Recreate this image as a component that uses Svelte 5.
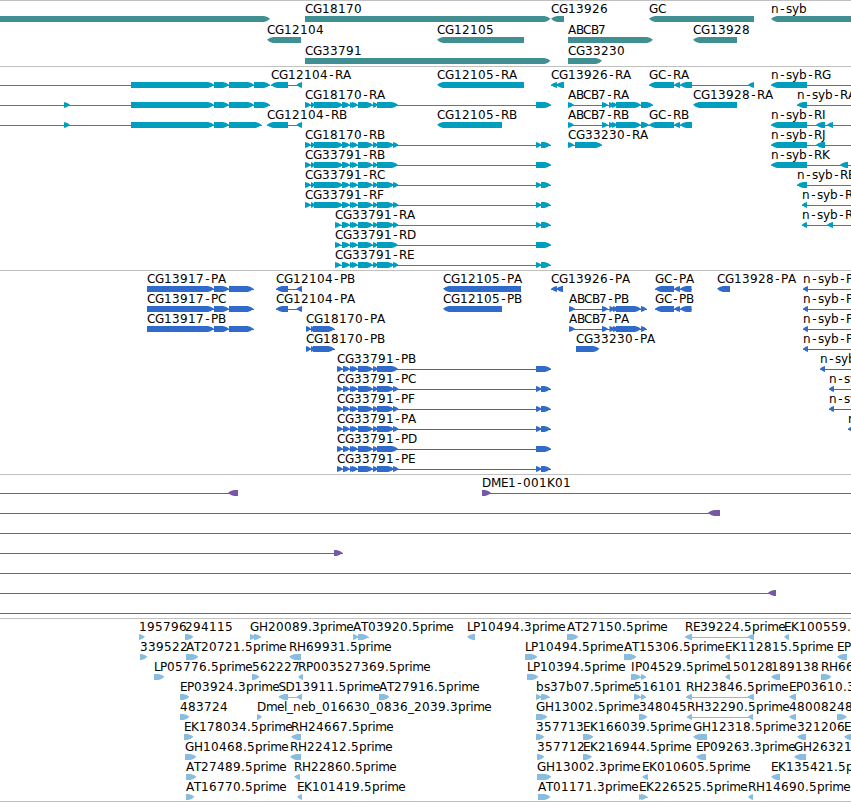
<script lang="ts">
  type Block = [number, number];

  interface Feature {
    row: number;
    name: string;
    strand: 1 | -1;
    blocks: Block[];
    span: Block;
  }

  interface Track {
    id: string;
    color: string;
    pitch: number;
    height: number;
    features: Feature[];
  }

  const width = 851;
  const barTop = 15;
  const barHeight = 6;

  // Features that run past the edge of the view
  const LEFT = -10;
  const RIGHT = 861;

  function f(row: number, name: string, strand: 1 | -1, blocks: Block[], from?: number, to?: number): Feature {
    const start = from ?? blocks[0][0];
    const end = to ?? blocks[blocks.length - 1][1];
    return { row, name, strand, blocks, span: [start, end] };
  }

  // Exon sets shared by several isoforms
  const cg13917: Block[] = [[131, 214], [214, 229], [229, 254], [254, 270]];
  const head: Block[] = [[305, 311], [311, 315], [314, 343]];
  const mid: Block[] = [[342, 350], [350, 355], [352, 358], [358, 373], [373, 378]];
  const tailLong: Block[] = [[377, 398], [536, 551]];
  const tailSplit: Block[] = [[377, 394], [393, 398.5], [536, 541.5], [541, 550.5]];
  const abcb7: Block[] = [[568, 574], [602, 608], [609, 614], [612, 617], [616, 641]];
  const gc: Block[] = [[649, 674], [674, 680], [680, 692]];
  const p13917: Block[] = [[147, 214], [214, 229], [229, 253.5]];
  const p12104: Block[] = [[276, 288], [296.5, 302]];
  const p18170: Block[] = [[306, 311], [311, 315], [313, 334.5]];
  const p33791: Block[] = [[337, 343], [343, 350], ...mid.slice(1)];
  const pAbcb7: Block[] = [[569, 575], [602, 608], [609.5, 614.5], [613, 618], [616, 641], [641, 646.5]];
  const pGc: Block[] = [[655, 674], [674, 680], [680, 691.5]];

  const genes: Feature[] = [
    f(0, '', 1, [[LEFT, 270]]),
    f(0, 'CG18170', 1, [[305, 550.5]]),
    f(0, 'CG13926', -1, [[551, 564]]),
    f(0, 'GC', -1, [[649, 754]]),
    f(0, 'n-syb', -1, [[771, RIGHT]]),
    f(1, 'CG12104', -1, [[267, 301]]),
    f(1, 'CG12105', -1, [[437, 524]]),
    f(1, 'ABCB7', 1, [[568, 653]]),
    f(1, 'CG13928', -1, [[693, 737]]),
    f(2, 'CG33791', 1, [[305, 550.5]]),
    f(2, 'CG33230', 1, [[568, 602]]),
  ];

  const transcripts: Feature[] = [
    f(0, '', 1, cg13917, LEFT),
    f(0, 'CG12104-RA', -1, [[271, 288], [296.5, 302]]),
    f(0, 'CG12105-RA', -1, [[437, 524]]),
    f(0, 'CG13926-RA', -1, [[551, 557], [556, 564]]),
    f(0, 'GC-RA', -1, [...gc, [748, 754]]),
    f(0, 'n-syb-RG', -1, [[771, 807]], 771, RIGHT),
    f(1, '', 1, [[64, 70], ...cg13917], LEFT),
    f(1, 'CG18170-RA', 1, [...head, ...mid, ...tailLong]),
    f(1, 'ABCB7-RA', 1, [...abcb7, [641, 653]]),
    f(1, 'CG13928-RA', -1, [[693, 737]]),
    f(1, 'n-syb-RA', -1, [[797, 807]], 797, RIGHT),
    f(2, '', 1, [[64, 70], ...cg13917.slice(0, 2), [229, 261.5]], LEFT),
    f(2, 'CG12104-RB', -1, [[267, 288], [296.5, 302]]),
    f(2, 'CG12105-RB', -1, [[437, 502]]),
    f(2, 'ABCB7-RB', 1, [...abcb7, [641, 649]]),
    f(2, 'GC-RB', -1, gc),
    f(2, 'n-syb-RI', -1, [[771, 807], [816, 825], [827, 833]], 771, RIGHT),
    f(3, 'CG18170-RB', 1, [...head, ...mid, ...tailSplit]),
    f(3, 'CG33230-RA', 1, [[568, 574], [575, 602]]),
    f(3, 'n-syb-RJ', -1, [[771, 807], [816, 825]], 771, RIGHT),
    f(4, 'CG33791-RB', 1, [...head, ...mid, ...tailLong]),
    f(4, 'n-syb-RK', -1, [[771, 807], [840, 848]], 771, RIGHT),
    f(5, 'CG33791-RC', 1, [...head, ...mid, ...tailSplit]),
    f(5, 'n-syb-RE', -1, [[797, 807]], 797, RIGHT),
    f(6, 'CG33791-RF', 1, [...head, ...mid, ...tailSplit]),
    f(6, 'n-syb-R', -1, [[802, 807]], 802, RIGHT),
    f(7, 'CG33791-RA', 1, [[335, 341], ...mid, ...tailSplit]),
    f(7, 'n-syb-R', -1, [[802, 807], [827, 833]], 802, RIGHT),
    f(8, 'CG33791-RD', 1, [[335, 341], ...mid, ...tailLong]),
    f(9, 'CG33791-RE', 1, [[335, 341], ...mid, ...tailSplit]),
  ];

  const proteins: Feature[] = [
    f(0, 'CG13917-PA', 1, p13917),
    f(0, 'CG12104-PB', -1, p12104),
    f(0, 'CG12105-PA', -1, [[443, 521]]),
    f(0, 'CG13926-PA', -1, [[551, 557], [556, 563]]),
    f(0, 'GC-PA', -1, pGc),
    f(0, 'CG13928-PA', -1, [[717, 730]]),
    f(0, 'n-syb-P', -1, [[803, 808]], 803, RIGHT),
    f(1, 'CG13917-PC', 1, p13917),
    f(1, 'CG12104-PA', -1, p12104),
    f(1, 'CG12105-PB', -1, [[443, 502]]),
    f(1, 'ABCB7-PB', 1, pAbcb7),
    f(1, 'GC-PB', -1, pGc),
    f(1, 'n-syb-P', -1, [[803, 808]], 803, RIGHT),
    f(2, 'CG13917-PB', 1, p13917),
    f(2, 'CG18170-PA', 1, p18170),
    f(2, 'ABCB7-PA', 1, pAbcb7),
    f(2, 'n-syb-P', -1, [[803, 808]], 803, RIGHT),
    f(3, 'CG18170-PB', 1, p18170),
    f(3, 'CG33230-PA', 1, [[576, 599.5]]),
    f(3, 'n-syb-P', -1, [[803, 808]], 803, RIGHT),
    f(4, 'CG33791-PB', 1, [...p33791, ...tailLong]),
    f(4, 'n-syb', -1, [[820, 825]], 820, RIGHT),
    f(5, 'CG33791-PC', 1, [...p33791, ...tailSplit]),
    f(5, 'n-sy', -1, [[829, 834]], 829, RIGHT),
    f(6, 'CG33791-PF', 1, [...p33791, ...tailSplit]),
    f(6, 'n-sy', -1, [[829, 834]], 829, RIGHT),
    f(7, 'CG33791-PA', 1, [...p33791, ...tailSplit]),
    f(7, 'n', -1, [[848, 853]], 848, RIGHT),
    f(8, 'CG33791-PD', 1, [...p33791, ...tailLong]),
    f(9, 'CG33791-PE', 1, [...p33791, ...tailSplit]),
  ];

  const clones: Feature[] = [
    f(0, '', -1, [[228, 238]], LEFT),
    f(0, 'DME1-001K01', 1, [[482, 491]], 482, RIGHT),
    f(1, '', -1, [[708, 720]], LEFT),
    f(2, '', 1, [], LEFT, RIGHT),
    f(3, '', 1, [[334, 342.5]], LEFT),
    f(4, '', 1, [], LEFT, RIGHT),
    f(5, '', -1, [[768, 776]], LEFT),
    f(6, '', 1, [], LEFT, RIGHT),
  ];

  const ests: Feature[] = [
    f(0, '195796', 1, [[139, 145]]),
    f(0, '294115', 1, [[185, 193.5]]),
    f(0, 'GH20089.3prime', 1, [[250, 255.5], [254, 261]]),
    f(0, 'AT03920.5prime', 1, [[353, 358.5], [358, 368.5]]),
    f(0, 'LP10494.3prime', -1, [[467, 475]]),
    f(0, 'AT27150.5prime', 1, [[567, 578.5]]),
    f(0, 'RE39224.5prime', -1, [[685, 692], [747.5, 754]]),
    f(0, 'EK100559.', -1, [[784, 789]]),
    f(1, '339522', 1, [[140, 147.5]]),
    f(1, 'AT20721.5prime', 1, [[186, 198.5]]),
    f(1, 'RH69931.5prime', -1, [[289, 301]]),
    f(1, 'LP10494.5prime', 1, [[525, 537.5]]),
    f(1, 'AT15306.5prime', 1, [[624, 636.5]]),
    f(1, 'EK112815.5prime', -1, [[725, 730]]),
    f(1, 'EP', -1, [[837, 847]]),
    f(2, 'LP05776.5prime', 1, [[154, 164.5]]),
    f(2, '562227', 1, [[252, 259.5]]),
    f(2, 'RP003527369.5prime', -1, [[298, 303]]),
    f(2, 'LP10394.5prime', 1, [[527, 538.5]]),
    f(2, 'IP04529.5prime', 1, [[631, 641], [641, 646]]),
    f(2, '150128', -1, [[725, 730]]),
    f(2, '189138', -1, [[771, 780]]),
    f(2, 'RH66', 1, [[821, 831.5]]),
    f(3, 'EP03924.3prime', 1, [[180, 189.5]]),
    f(3, 'SD13911.5prime', -1, [[278.5, 288], [296.5, 302]]),
    f(3, 'AT27916.5prime', 1, [[379, 389.5]]),
    f(3, 'bs37b07.5prime', 1, [[536, 541.5], [541, 549.5]]),
    f(3, '516101', 1, [[634, 641], [641, 646]]),
    f(3, 'RH23846.5prime', -1, [[686, 692], [747.5, 754]]),
    f(3, 'EP03610.3', -1, [[789, 796]]),
    f(4, '483724', 1, [[180, 189.5]]),
    f(4, 'Dmel_neb_016630_0836_2039.3prime', 1, [[257, 262]]),
    f(4, 'GH13002.5prime', 1, [[536, 547.5]]),
    f(4, '348045', 1, [[639, 647.5]]),
    f(4, 'RH32290.5prime', -1, [[687, 692], [748, 753]]),
    f(4, '480082', -1, [[789, 796]]),
    f(4, '48', 1, [[837, 847]]),
    f(5, 'EK178034.5prime', 1, [[184, 193.5]]),
    f(5, 'RH24667.5prime', -1, [[291, 301]]),
    f(5, '357713', 1, [[536, 544.5]]),
    f(5, 'EK166039.5prime', 1, [[583, 593.5]]),
    f(5, 'GH12318.5prime', -1, [[693, 707]]),
    f(5, '321206', -1, [[797, 806]]),
    f(5, 'E', -1, [[844, 856]]),
    f(6, 'GH10468.5prime', 1, [[185, 196.5]]),
    f(6, 'RH22412.5prime', -1, [[290, 301]]),
    f(6, '357712', 1, [[537, 544.5]]),
    f(6, 'EK216944.5prime', 1, [[583, 592]]),
    f(6, 'EP09263.3prime', -1, [[696, 706]]),
    f(6, 'GH26321', -1, [[794, 806]]),
    f(7, 'AT27489.5prime', 1, [[186, 196.5]]),
    f(7, 'RH22860.5prime', -1, [[294, 300]]),
    f(7, 'GH13002.3prime', 1, [[537, 551.5]]),
    f(7, 'EK010605.5prime', -1, [[642, 648]]),
    f(7, 'EK135421.5p', -1, [[771, 780]]),
    f(8, 'AT16770.5prime', 1, [[186, 194.5]]),
    f(8, 'EK101419.5prime', -1, [[297, 302]]),
    f(8, 'AT01171.3prime', 1, [[538, 550.5]]),
    f(8, 'EK226525.5prime', 1, [[639, 643], [641, 647.5]]),
    f(8, 'RH14690.5prime', -1, [[748, 753]]),
  ];

  const tracks: Track[] = [
    { id: 'genes', color: '#3f8f93', pitch: 21, height: 65, features: genes },
    { id: 'transcripts', color: '#009ebe', pitch: 20, height: 203, features: transcripts },
    { id: 'proteins', color: '#306acb', pitch: 20, height: 203, features: proteins },
    { id: 'clones', color: '#7559a6', pitch: 20, height: 143, features: clones },
    { id: 'ests', color: '#89bddf', pitch: 20, height: 182, features: ests },
  ];

  // Advances in px, anything not listed is 8 wide
  const advances: Record<string, number> = {
    G: 9, H: 9, D: 9, M: 10, B: 7, E: 7, F: 7, L: 6, P: 7, S: 7, T: 7, I: 4, J: 4,
    '-': 7, '.': 4, _: 6,
    p: 7.5, r: 4.75, i: 3, m: 11, e: 7, l: 3, s: 6, y: 7,
  };

  function glyphXs(name: string, x: number): string {
    const xs: number[] = [];
    for (const ch of name) {
      // centre the short hyphen in its cell
      xs.push(ch === '-' ? x + 1.25 : x);
      x += advances[ch] ?? 8;
    }
    return xs.join(' ');
  }

  function arrow([a, b]: Block, strand: 1 | -1, y: number): string {
    const head = Math.min(6, b - a);
    const [back, tip] = strand === 1 ? [a, b] : [b, a];
    const neck = tip - strand * head;
    const bend = tip - strand * head * 0.4;
    const mid = y + barHeight / 2 - 0.25;
    const bottom = y + barHeight;
    return `M${back} ${y}H${neck}Q${bend} ${y + 0.75} ${tip} ${mid}Q${bend} ${bottom - 0.75} ${neck} ${bottom}H${back}Z`;
  }
</script>

<main class="browser">
  {#each tracks as track (track.id)}
    <section class="track">
      <svg {width} height={track.height} viewBox="0 0 {width} {track.height}">
        {#each track.features as feature}
          {@const y = barTop + feature.row * track.pitch}
          <g fill={track.color}>
            <!-- a lone block has no introns to bridge -->
            {#if feature.blocks.length !== 1 || feature.span[0] !== feature.blocks[0][0] || feature.span[1] !== feature.blocks[0][1]}
              <rect
                x={feature.span[0]}
                y={y + 3}
                width={feature.span[1] - feature.span[0]}
                height="1"
                shape-rendering="crispEdges"
              />
            {/if}
            {#each feature.blocks as block}
              <path d={arrow(block, feature.strand, y)} />
            {/each}
          </g>
          {#if feature.name}
            <text x={glyphXs(feature.name, feature.span[0])} y={y - 3}>{feature.name}</text>
          {/if}
        {/each}
      </svg>
    </section>
  {/each}
</main>

<style>
  :global(body) {
    margin: 0;
    background: #fff;
  }

  .browser {
    width: 851px;
    overflow: hidden;
    border-bottom: 1px solid #c0c0c0;
  }

  .track {
    border-top: 1px solid #c0c0c0;
  }

  .track svg {
    display: block;
    overflow: hidden;
  }

  text {
    font-family: 'DejaVu Sans', sans-serif;
    font-size: 12px;
    fill: #000;
  }
</style>
